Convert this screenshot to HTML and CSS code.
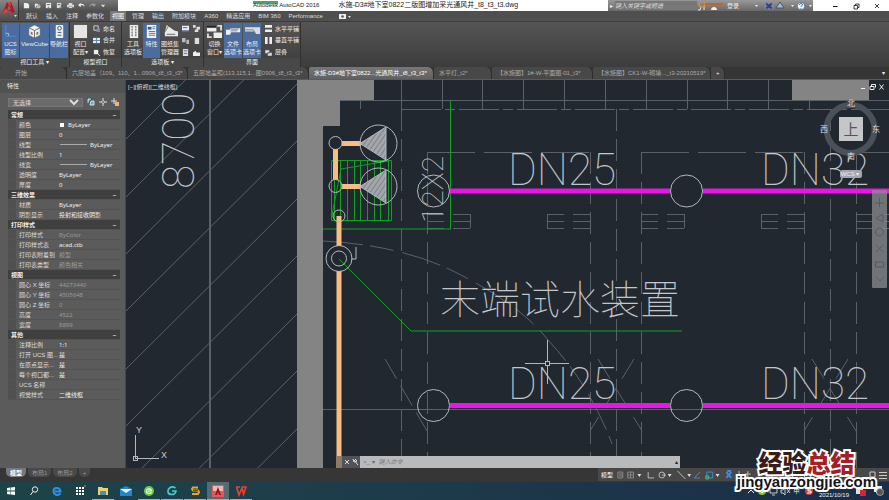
FILE: index.html
```html
<!DOCTYPE html>
<html lang="zh-CN">
<head>
<meta charset="utf-8">
<title>Autodesk AutoCAD 2016</title>
<link rel="stylesheet" href="styles.css">
</head>
<body>
<header class="titlebar">
  <div class="quick">
    <button aria-label="新建"><svg viewBox="0 0 8 8"><path d="M1 1h4l2 2v4H1z" fill="#eee"/></svg></button>
    <button aria-label="打开"><svg viewBox="0 0 8 8"><path d="M1 2h3l1 1h2v1H3L1 7z" fill="#eee"/><path d="M2 7l1.500-2.500H8L6.500 7z" fill="#bbb"/></svg></button>
    <button aria-label="保存"><svg viewBox="0 0 8 8"><path d="M1 1h6v6H1z" fill="#eee"/><path d="M2 3h4M3 6h2" stroke="#456"/></svg></button>
    <button aria-label="另存为"><svg viewBox="0 0 8 8"><path d="M1 1h5v6H1z" fill="#ddd"/><path d="M2 3h3M4 7l4-4" stroke="#456"/></svg></button>
    <button aria-label="打印"><svg viewBox="0 0 8 8"><path d="M2 1h4v2h2v3H0V3h2z" fill="#ddd"/><path d="M2 5h4v2H2z" fill="#fff" stroke="#555" stroke-width=".5"/></svg></button>
    <button aria-label="放弃"><svg viewBox="0 0 8 8"><path d="M3 1L0 3.500 3 6V4c2-.5 4 0 4 2 1-3-1-4-4-4z" fill="#eee"/></svg></button>
    <button aria-label="重做" class="dim"><svg viewBox="0 0 8 8"><path d="M5 1l3 2.500L5 6V4C3 3.500 1 4 1 6 0 3 2 2 5 2z" fill="#eee"/></svg></button>
    <button aria-label="更多"><svg viewBox="0 0 8 8"><path d="M1 3h5L3.500 6z" fill="#ddd"/></svg></button>
  </div>
  <h1 class="doc-title"><span class="app-name">Autodesk AutoCAD 2016</span><span>水施-D3#地下室0822二版图增加采光通风井_t8_t3_t3.dwg</span></h1>
  <div class="infobar">
    <button aria-label="展开搜索">▸</button>
    <input type="text" aria-label="搜索" placeholder="键入关键字或短语">
    <svg class="ic-wide" viewBox="0 0 30 10"><path d="M3 9l1-4M7 9V5M1 9h2" stroke="#eee"/><circle cx="5" cy="3" r="3" fill="none" stroke="#cf8b4d" stroke-width="1.500"/><path d="M8 3h18" stroke="#b9692d" stroke-width="2"/><path d="M14 9c0-4 6-4 6 0z" fill="#eee"/></svg>
    <button class="login">登录</button>
    <svg class="ic-mid" viewBox="0 0 60 10"><path d="M2 4l1.500 2L5 4zM38 4l1.500 2L41 4zM56 4l1.500 2L59 4z" fill="#eee"/><path d="M13 2l6 6M19 2l-6 6" stroke="#303f86" stroke-width="2"/><path d="M12 2h8v6h-8z" fill="none" stroke="#8996c6" stroke-width=".6"/><path d="M27 1l4 6h-8z" fill="#aab9d0" stroke="#41577c"/><circle cx="48" cy="5" r="3.800" fill="#f3f3f3" stroke="#426b91" stroke-width=".8"/><path d="M46.500 4c0-2 3-2 3-.3 0 1-1.500 1-1.500 2M48 7v.8" stroke="#25588e" fill="none"/></svg>
  </div>
  <div class="winctl">
    <button aria-label="最小化"><svg viewBox="0 0 8 8"><path d="M2 4.500h4.500" stroke="#111"/></svg></button>
    <button aria-label="还原"><svg viewBox="0 0 8 8"><path d="M2 3.500h3.500V7H2zM3.500 3V2H7v3.500H6" fill="none" stroke="#111" stroke-width=".8"/></svg></button>
    <button aria-label="关闭"><svg viewBox="0 0 8 8"><path d="M2 2l4 4M6 2L2 6" stroke="#111" stroke-width=".8"/></svg></button>
  </div>
</header>
<button class="app-button" aria-label="应用程序菜单"><svg viewBox="0 0 18 20"><path d="M2 15L7 2h4l4 10-3 1-1-2H8l3-2-2-4-3 8z" fill="#b31820"/><path d="M7 2h3l1 4-2-1zM2 15l4-7 1 4z" fill="#e3454b"/><path d="M14 15h3l-1.500 2z" fill="#ddd"/></svg></button>

<nav class="menu">
  <button>默认</button><button>插入</button><button>注释</button><button>参数化</button><button class="on">视图</button><button>管理</button><button>输出</button><button>附加模块</button><button>A360</button><button>精选应用</button><button>BIM 360</button><button>Performance</button>
  <button aria-label="功能区显示"><svg class="camera" viewBox="0 0 12 6"><path d="M0 1h7v5H0z" fill="#eee"/><circle cx="3.500" cy="3.500" r="1.300" fill="#555"/><path d="M9 3h3l-1.500 2z" fill="#ddd"/></svg></button>
</nav>

<section class="ribbon">
  <div class="panel p1">
    <div class="tools">
      <button class="big on"><svg viewBox="0 0 16 16"><path d="M3 2v11h11" fill="none" stroke="#5e9bd8" stroke-dasharray="2 1"/><path d="M3 10h3v3" stroke="#9cc4ea" fill="none"/></svg><span>UCS<br>图标</span></button>
      <button class="big wide on"><svg viewBox="0 0 16 16"><path d="M2 4l6-3 6 3v8l-6 3-6-3z" fill="#f1f1f1" stroke="#666" stroke-width=".6"/><path d="M2 4l6 3 6-3M8 7v8" stroke="#666" fill="none"/><path d="M4 8l2 1v3l-2-1zM10 9l2-1v3l-2 1z" fill="#777"/></svg><span>ViewCube<br>&nbsp;</span></button>
      <button class="big on"><svg viewBox="0 0 16 16"><rect x="4" y="1" width="8" height="14" rx="1" fill="#eee"/><circle cx="8" cy="4.500" r="2" fill="none" stroke="#456"/><path d="M6 9h4M6 12h4" stroke="#456"/></svg><span>导航栏<br>&nbsp;</span></button>
    </div><h2>视口工具 <i>▾</i></h2>
  </div>
  <div class="panel p2">
    <div class="tools">
      <button class="big"><svg viewBox="0 0 16 16"><path d="M1 1h14v14H1z" fill="#e6e6e6"/></svg><span>视口<br>配置▾</span></button>
      <div class="stack">
        <button><svg viewBox="0 0 8 8"><path d="M1 1h5v5H1z" fill="none" stroke="#ddd"/><path d="M4 4h4v4H4z" fill="#7a8da6"/></svg>命名</button>
        <button><svg viewBox="0 0 8 8"><path d="M0 1h8v6H0z" fill="#dce9f3"/><path d="M0 4h8M4 1v6" stroke="#5482aa"/></svg>合并</button>
        <button><svg viewBox="0 0 8 8"><path d="M1 1h5v5H1z" fill="#eee"/><path d="M5 5l3 3" stroke="#eee"/></svg>恢复</button>
      </div>
    </div><h2>模型视口</h2>
  </div>
  <div class="panel p3">
    <div class="tools">
      <button class="big"><svg viewBox="0 0 16 16"><path d="M4 1h9v14H4z" fill="#eee"/><path d="M6 3h1M10 3h1M6 6h1M10 6h1M6 9h1M10 9h1M6 12h1M10 12h1" stroke="#444" stroke-width="2"/></svg><span>工具<br>选项板</span></button>
      <button class="big on"><svg viewBox="0 0 16 16"><path d="M3 1h10v14H3z" fill="#f4f4f4"/><path d="M4 3h4v3H4z" fill="#315f99"/><path d="M9 3h3M9 5h3M5 8h7M5 10h7M5 12h7" stroke="#56779f"/></svg><span>特性<br>&nbsp;</span></button>
      <button class="big"><svg viewBox="0 0 16 16"><path d="M4 1l8 6 4 1v5H2V8z" fill="#e9e9e9"/><path d="M1 10L6 2M4 11h9" stroke="#666"/></svg><span>图纸集<br>管理器</span></button>
      <div class="minis">
        <button aria-label="命令行" class="on"><svg viewBox="0 0 8 8"><path d="M0 1h8v5H0z" fill="#eee"/><path d="M1 3h5" stroke="#456"/></svg></button>
        <button aria-label="设计中心"><svg viewBox="0 0 8 8"><path d="M0 0h3v3H0zM4 2h4v3H4zM2 5h4v3H2z" fill="#ddd"/></svg></button>
        <button aria-label="标记集"><svg viewBox="0 0 8 8"><path d="M0 1h4v5H0zM5 3h3v5H5z" fill="#b9b9b9"/></svg></button>
        <button aria-label="外部参照"><svg viewBox="0 0 8 8"><path d="M2 1h5v7H2z" fill="#ddd"/></svg></button>
        <button aria-label="计算器"><svg viewBox="0 0 8 8"><path d="M1 0h6v8H1z" fill="#ddd"/><path d="M2 2h4M2 5h4" stroke="#546a8e"/></svg></button>
        <button aria-label="图层"><svg viewBox="0 0 8 8"><path d="M0 4l3-2 1 2h4v4H0z" fill="#eee"/></svg></button>
      </div>
    </div><h2>选项板 <i>▾</i></h2>
  </div>
  <div class="panel p4">
    <div class="tools">
      <button class="big"><svg viewBox="0 0 16 16"><path d="M0 2h10v6H0zM7 9h9v6H7z" fill="#eee"/><path d="M11 2h4v5M5 14H1v-4" stroke="#ddd" stroke-width="2" fill="none"/><path d="M0 2h10v2H0z" fill="#222"/></svg><span>切换<br>窗口▾</span></button>
      <button class="big mid on"><svg viewBox="0 0 18 14"><path d="M0 5h4l2-2h11v5H6l-1 3H0z" fill="#eee"/><path d="M6 3h10l-3 4H5z" fill="#aaa"/></svg><span>文件<br>选项卡</span></button>
      <button class="big mid on"><svg viewBox="0 0 18 14"><path d="M0 2h18v8h-5l-2-3H0z" fill="#ddd"/><path d="M0 5h10l3 5" stroke="#777" fill="none"/></svg><span>布局<br>选项卡</span></button>
      <div class="stack">
        <button><svg viewBox="0 0 8 8"><path d="M0 0h8v3H0zM0 5h8v3H0z" fill="#eee"/></svg>水平平铺</button>
        <button><svg viewBox="0 0 8 8"><path d="M0 0h3v8H0zM5 0h3v8H5z" fill="#eee"/></svg>垂直平铺</button>
        <button><svg viewBox="0 0 8 8"><path d="M0 1h5v4H0zM3 4h5v4H3z" fill="#ddd" stroke="#555" stroke-width=".6"/></svg>层叠</button>
      </div>
    </div><h2>界面</h2>
  </div>
</section>

<nav class="files">
  <button class="t0">开始</button>
  <button class="t1">六层地盖（109、110、1...0906_t8_t3_t3*</button>
  <button class="t2">五层地盖照(113,115,1...图0906_t8_t3_t3*</button>
  <button class="t3 on">水施-D3#地下室0822...光通风井_t8_t3_t3*</button>
  <button class="t4">水平灯_t2*</button>
  <button class="t5">【水施图】1#-W-平面图-01_t3*</button>
  <button class="t6">【水施图】CK1-W-砌墙..._t3-20210519*</button>
  <button class="plus">+</button>
  <span class="more">▾</span>
</nav>

<main class="work">
  <aside class="props">
    <h2>特性</h2>
    <div class="picker">
      <select aria-label="选择对象"><option>无选择</option></select>
      <button aria-label="切换"><svg viewBox="0 0 8 8"><path d="M0 0h5v5H0z" fill="#2d5160"/><path d="M1 5V1h3M4 3h3v4H3z" stroke="#cfe3ec" fill="#78a4b5"/></svg></button>
      <button aria-label="选择"><svg viewBox="0 0 8 8"><path d="M4 0v8M0 4h8" stroke="#ddd"/><circle cx="4" cy="4" r="1.400" fill="#5b5b5b" stroke="#eee" stroke-width=".6"/></svg></button>
      <button aria-label="快速选择"><svg viewBox="0 0 8 8"><path d="M3 0v6M0 3h6" stroke="#ddd"/><path d="M4 4h4v4H4z" fill="#e9b67c"/></svg></button>
    </div>
    <table>
      <colgroup><col class="name"><col></colgroup>
      <tbody>
        <tr class="sec"><th colspan="2">常规<b>–</b></th></tr>
        <tr><th>颜色</th><td><span class="swatch"></span>ByLayer</td></tr>
        <tr><th>图层</th><td>0</td></tr>
        <tr><th>线型</th><td><span class="rule"></span>ByLayer</td></tr>
        <tr><th>线型比例</th><td>1</td></tr>
        <tr><th>线宽</th><td><span class="rule"></span>ByLayer</td></tr>
        <tr><th>透明度</th><td>ByLayer</td></tr>
        <tr><th>厚度</th><td>0</td></tr>
      </tbody>
      <tbody>
        <tr class="sec"><th colspan="2">三维效果<b>–</b></th></tr>
        <tr><th>材质</th><td>ByLayer</td></tr>
        <tr><th>阴影显示</th><td>投射和接收阴影</td></tr>
      </tbody>
      <tbody>
        <tr class="sec"><th colspan="2">打印样式<b>–</b></th></tr>
        <tr><th>打印样式</th><td class="off">ByColor</td></tr>
        <tr><th>打印样式表</th><td>acad.ctb</td></tr>
        <tr><th>打印表附着到</th><td class="off">模型</td></tr>
        <tr><th>打印表类型</th><td class="off">颜色相关</td></tr>
      </tbody>
      <tbody>
        <tr class="sec"><th colspan="2">视图<b>–</b></th></tr>
        <tr><th>圆心 X 坐标</th><td class="off">44273440</td></tr>
        <tr><th>圆心 Y 坐标</th><td class="off">4505648</td></tr>
        <tr><th>圆心 Z 坐标</th><td class="off">0</td></tr>
        <tr><th>高度</th><td class="off">4522</td></tr>
        <tr><th>宽度</th><td class="off">8899</td></tr>
      </tbody>
      <tbody>
        <tr class="sec"><th colspan="2">其他<b>–</b></th></tr>
        <tr><th>注释比例</th><td>1:1</td></tr>
        <tr><th>打开 UCS 图...</th><td>是</td></tr>
        <tr><th>在原点显示...</th><td>是</td></tr>
        <tr><th>每个视口都...</th><td>是</td></tr>
        <tr><th>UCS 名称</th><td></td></tr>
        <tr><th>视觉样式</th><td>二维线框</td></tr>
      </tbody>
    </table>
  </aside>

  <section class="canvas">
    <svg class="drawing" viewBox="126 80 763 388" preserveAspectRatio="xMinYMin slice">
      <defs>
        <pattern id="hatch" width="4" height="4" patternUnits="userSpaceOnUse" patternTransform="rotate(35)"><path d="M0 0h4v4H0z" fill="#a3a7ac"/><path d="M0 0v4" stroke="#5a6068" stroke-width="1"/></pattern>
        <g id="cross"><path d="M-18 -31L26 41M18 -31L-26 41" stroke-dasharray="23 11"/></g>
        <g id="pump"><circle r="18.500"/><path d="M-18.500 0L7.500-16.500v33z" fill="url(#hatch)"/></g>
      </defs>
      <g class="hair">
        <path d="M126 139l171-170M126 197l171-170M126 254l171-170M126 311l171-170M126 369l171-170M126 426l171-170M126 484l171-170M126 541l171-170M126 599l171-170"/>
        <path d="M210 80v388" stroke-width="2"/>
      </g>
      <path class="mass" d="M297 80h77v21h-34v25h-17v342h-26zM792 80h77v21h-77z"/>
      <g class="hair crisp">
        <path d="M340 100.500h549M360.500 100v9M401.500 80v29M442.500 80v29M482.500 80v29M523.500 80v29M564.500 80v29M605.500 80v29M646.500 80v29M687.500 80v29M727.500 80v29M768.500 80v29M809.500 101v8M323 409.500h566"/>
        <path d="M401 109.500h488" stroke-dasharray="40 4 10 4"/>
        <path d="M427 152.500h163M641 152.500h163M856 152.500h33" stroke-dasharray="48 9"/>
        <path d="M401.500 109v359M616.500 109v359M830.500 109v359M427.500 152v316M590.500 152v316M641.500 152v316M804.500 152v316M856.500 152v316" stroke-dasharray="22 8"/>
        <path d="M427 214.500h43M427 221.500h43M427 228.500h43M547 214.500h43M547 221.500h43M547 228.500h43M641 214.500h43M641 221.500h43M641 228.500h43M761 214.500h43M761 221.500h43M761 228.500h43M856 214.500h33M856 221.500h33M856 228.500h33" stroke-dasharray="17 9"/>
        <path d="M470.500 214v14M547.500 214v14M684.500 214v14M761.500 214v14"/>
      </g>
      <g class="hair">
        <use href="#cross" x="616" y="390"/><use href="#cross" x="830" y="390"/>
        <path d="M385 359l42 72" stroke-dasharray="23 8"/>
        <path d="M323 241Q400 245 453 271Q520 304 548 340Q590 385 612 444" stroke-dasharray="40 7 24 9"/>
      </g>
      <g class="green">
        <path d="M331.500 160.500h60v60h-60zM334.500 160v60M340.500 160v60M347.500 160v60M354.500 160v60M360.500 160v60M367.500 160v60M374.500 160v60M380.500 160v60M388.500 160v60"/>
        <path d="M332 215l9-46 47-8M450.500 101v128M323 229h128"/>
        <path d="M339 259l72 72h271"/>
      </g>
      <g class="pipe"><path d="M335.500 149v31M342 143.500h19M342 186.500h19M339 216v30M339 271v197"/></g>
      <g class="main-pipe"><path d="M450 191h220M703 191h186M450 405.500h220M703 405.500h186"/></g>
      <g class="white">
        <circle cx="335.500" cy="143" r="6.500"/><circle cx="335.500" cy="186" r="6.500"/><circle cx="339" cy="216" r="6"/>
        <circle cx="339" cy="258.500" r="13"/><circle cx="339" cy="258.500" r="7.500"/>
        <path d="M356 247v12h-5"/>
        <use href="#pump" x="378.500" y="143.500"/><use href="#pump" x="378.500" y="186.500"/>
        <circle cx="433.500" cy="191" r="16"/><circle cx="686.500" cy="191" r="16"/>
        <circle cx="433.500" cy="405.500" r="16"/><circle cx="686.500" cy="405.500" r="16"/>
      </g>
      <g class="label">
        <text x="508" y="185">DN25</text><text x="761" y="185">DN32</text>
        <text x="508" y="399">DN25</text><text x="761" y="399">DN32</text>
        <text transform="translate(194 189) rotate(-90)">8700</text>
        <text class="short" transform="translate(443 223) rotate(-90)">12X2</text>
        <text class="han" x="440" y="314">末端试水装置</text>
      </g>
      <g class="white crisp"><path d="M547.500 340v21M547.500 365v19M525 363.500h20M549 363.500h20M545.500 361.500h4v4h-4z"/>
        <path d="M135.500 435v23.500h23M133.500 456.500h4v4h-4z"/></g>
      <g class="axis"><text x="136" y="433">Y</text><text x="161" y="458">X</text></g>
      <g class="cube">
        <circle cx="850.500" cy="129" r="24"/>
        <path d="M839 117h24v24h-24z" fill="#c4c6c7"/>
        <rect x="840" y="170" width="22" height="8" rx="2" fill="#a3a7b2"/>
        <text x="851" y="106">北</text><text x="851" y="159">南</text><text x="824" y="132">西</text><text x="876" y="132">东</text>
        <text class="top" x="851" y="135">上</text><text class="wcs" x="850" y="176">WCS ▾</text>
      </g>
      <path d="M861 88.500h4M870 86.500h4v3h-4zM871.500 86v-1.500h4v3M879.500 84.500l4 5M883.500 84.500l-4 5" stroke="#eee" fill="none"/>
      <g class="navbar"><rect x="872" y="190" width="15" height="98" rx="1"/><path d="M879.500 198v9M875 203h9M876 218l7-4v8zM879.500 228a4 4 0 1 1-.1 0M876 245l7 7M883 245l-7 7M875.500 262h8v5h-8zM876 277l4 4 4-4"/></g>
    </svg>
    <span class="view-label">[−][俯视][二维线框]</span>
    <form class="command">
      <span class="grip"></span>
      <span class="cmd-tools"><svg viewBox="0 0 18 10"><path d="M3 3l4 4M7 3L3 7M12 3l4 5M11 2l1 3 3-1-2-2" stroke="#ddd" fill="none"/></svg></span>
      <label for="cmd">&gt;_ ▾</label><input id="cmd" type="text" placeholder="键入命令"><span class="up">▴</span>
    </form>
  </section>
</main>

<footer class="status">
  <button class="on">模型</button><button>布局1</button><button>布局2</button><button>+</button>
  <div class="modes">
    <span>模型</span>
    <svg viewBox="0 0 262 12" preserveAspectRatio="xMinYMid meet"><g fill="none" stroke="#bbb"><path d="M5 3h5v6H5zM6 5h4M6 7h4M15 3h6v6h-6zM18 3v6M15 6h6" stroke="#888"/><path d="M36 3v6h6"/><circle cx="50" cy="6" r="3"/><path d="M50 6h4M66 2l8 8"/><path d="M83 9l6-6M83 9h6M96 3h6v6h-6z" stroke="#388be0"/><path d="M95 7h3v3h-3z" stroke="#53bb81"/><path d="M116 3l5 6M121 3l-5 6M117 2h4" stroke="#388be0" stroke-width="2"/><path d="M129 2v8M126 6h5M138 2v8M135 5h6M157 4h6v4h-6M180 3l5 6M196 3h6v6h-6z"/><path d="M212 3h6v6h-6z" stroke="#388be0" stroke-width="2"/><path d="M228 7l3-4 3 4z" stroke="#dc8e43"/></g><path d="M25 5h4l-2 3zM56 5h4l-2 3zM76 5h4l-2 3zM105 5h4l-2 3z" fill="#ddd"/></svg>
    <svg class="burger" viewBox="0 0 20 12"><path d="M1 3h5v5H1zM10 3.500h8M10 6.500h8M10 9.500h8" stroke="#ccc" fill="none"/></svg>
  </div>
</footer>

<footer class="taskbar">
  <button aria-label="开始"><svg viewBox="0 0 12 12"><path d="M2 3l3.500-.5v3H2zM6 2.400L10 2v3.500H6zM2 6.500h3.500v3L2 9zM6 6.500h4V10l-4-.5z" fill="#fff"/></svg></button>
  <button aria-label="搜索"><svg viewBox="0 0 12 12"><circle cx="7" cy="4.500" r="2.700" fill="none" stroke="#eee"/><path d="M5 6.500L2.500 10" stroke="#eee"/></svg></button>
  <button aria-label="Edge"><svg viewBox="0 0 12 12"><path d="M9.500 8.500C7 11 2.500 10 2.500 6S9 1.500 9.500 6.500H4" fill="none" stroke="#2f91e6" stroke-width="2"/></svg></button>
  <button aria-label="应用"><svg viewBox="0 0 12 12"><path d="M2 3h2M5 3h2M8 3h2M2 6h2M5 6h2M8 6h2M2 9h2M5 9h2M8 9h2" stroke="#fff" stroke-width="2"/><circle cx="11" cy="1" r="1" fill="#e04b4b"/></svg></button>
  <button aria-label="文件资源管理器" class="run"><svg viewBox="0 0 12 12"><path d="M1 2h4l1 1h5v7H1z" fill="#f5cf65"/><path d="M3 6h6v4H3z" fill="#478fbd"/></svg></button>
  <button aria-label="邮件"><svg viewBox="0 0 12 12"><path d="M0 4l6-3 6 3v7H0z" fill="#2384d4"/><path d="M0 4l6 4 6-4z" fill="#e8f5ff"/></svg></button>
  <button aria-label="浏览器" class="run"><svg viewBox="0 0 12 12"><circle cx="6" cy="6" r="5" fill="#71c84b"/><path d="M8.500 7.500C7 9 3.500 9 3.500 6S8.500 3.500 8.500 6H5" fill="none" stroke="#efffdf" stroke-width="1.200"/></svg></button>
  <button aria-label="同步" class="run"><svg viewBox="0 0 12 12"><path d="M9.500 3C5 0 1.500 4 2 7s7 4 8-1H6" fill="none" stroke="#4ac7cd" stroke-width="1.600"/></svg></button>
  <button aria-label="工具" class="run"><svg viewBox="0 0 12 12"><path d="M9 2.500H4L3 4l1 1.500h5L10 7 9 9H3" fill="none" stroke="#e7a820" stroke-width="2"/><path d="M4 5.500h5" stroke="#8b4a14"/></svg></button>
  <button aria-label="AutoCAD" class="run current"><svg viewBox="0 0 12 12"><path d="M0 0h12v12H0z" fill="#dc5c5b"/><path d="M1 1h10v5H1z" fill="#f1b6b4"/><path d="M3 10l3-8 3 8H7L6 7l-1 3z" fill="#9e1118"/></svg></button>
  <button aria-label="WPS" class="run"><svg viewBox="0 0 12 12"><path d="M1 2h4M1.500 2L4 10l3-7 1.500 6L11 2H7" fill="none" stroke="#e2432f" stroke-width="1.700"/></svg></button>
  <div class="tray">
    <svg viewBox="0 0 46 12"><path d="M2 8l3-3 3 3" stroke="#eee" fill="none"/><circle cx="16" cy="6" r="4" fill="#86c928"/><path d="M14 6l2 2 3-4" stroke="#fff" fill="none"/><path d="M24 3h7v5h-7zM26 10h3M35 5h2l2-2v7l-2-2h-2zM41 4l3 4M44 4l-3 4" stroke="#eee" fill="none" stroke-width=".8"/></svg>
    <span class="ime">中</span>
    <svg class="sogou" viewBox="0 0 12 12"><circle cx="6" cy="6" r="4" fill="#da3b35"/><path d="M8 4H5v2h3v2H4" stroke="#fff" fill="none"/></svg>
    <time>2021/10/19</time>
    <svg class="notes" viewBox="0 0 40 12"><path d="M7 2h7v7H7z" fill="#ddd"/><path d="M11 5h6v6h-6z" fill="#d92531"/><path d="M25 1h8v6h-4l-2 2V7h-2z" fill="#eee"/><circle cx="31" cy="7" r="3.500" fill="#555" stroke="#ccc" stroke-width=".6"/></svg>
  </div>
</footer>

<div class="watermark"><strong>经验<em>总结</em></strong><span>jingyanzongjie.com</span></div>
</body>
</html>
```
FILE: styles.css
```css
* { box-sizing: border-box; }
body {
  margin: 0; height: 100vh; overflow: hidden; position: relative;
  display: flex; flex-direction: column; background: #212830; color: #ddd;
  font: 6px/8px "Liberation Sans", "Noto Sans CJK SC", sans-serif;
}
button, input, select { font: inherit; color: inherit; background: none; border: 0; padding: 0; margin: 0; }
button { white-space: nowrap; }
h1, h2 { margin: 0; font: inherit; }
svg { display: block; }

.titlebar { flex: 0 0 11px; display: flex; background: #fff; color: #222; }
.quick { flex: 0 0 118px; padding-left: 23px; display: flex; align-items: center; gap: 4px; background: linear-gradient(#777, #505050); }
.quick button { flex: 0 0 7px; }
.quick .dim { opacity: .4; }
.quick svg { width: 7px; height: 7px; }
.doc-title { flex: 1; display: flex; gap: 19px; padding: 1px 0 0 135px; font-size: 7px; white-space: nowrap; background: linear-gradient(#49a36c, #49a36c) 135px 1px / 25px 3px no-repeat; }
.app-name { font-size: 6px; }
.infobar { flex: 0 0 205px; display: flex; align-items: center; color: #eee; background: linear-gradient(#999, #676767); }
.infobar > button:first-child { width: 7px; }
.infobar input { width: 82px; height: 9px; background: #777; font-style: italic; }
.infobar input::placeholder { color: #ddd; }
.ic-wide { width: 30px; height: 10px; }
.login { width: 18px; text-align: left; }
.ic-mid { margin-left: auto; width: 60px; height: 10px; }
.winctl { flex: 0 0 76px; display: flex; justify-content: space-around; align-items: center; padding: 0 2px 0 12px; }
.winctl svg { width: 8px; height: 8px; }
.app-button { position: absolute; left: 0; top: 0; width: 19px; height: 20px; background: linear-gradient(#878787, #4d4d4d); border-right: 1px solid #333; }
.app-button svg { width: 18px; height: 20px; }

.menu { flex: 0 0 10px; display: flex; align-items: center; gap: 4px; padding-left: 24px; background: #4f4f4f; }
.menu button { padding: 0 2px; height: 10px; line-height: 10px; }
.menu .on { background: #777; color: #fff; }
.camera { width: 12px; height: 6px; margin-left: 8px; }

.ribbon { flex: 0 0 46px; display: flex; background: linear-gradient(#555, #3c3c3c); border-top: 1px solid #3b3b3b; }
.panel { display: flex; flex-direction: column; border-right: 1px solid #303030; padding: 1px 1px 0 2px; }
.p1 { flex: 0 0 70px; } .p2 { flex: 0 0 52px; } .p3 { flex: 0 0 82px; } .p4 { flex: 0 0 96px; }
.panel h2 { text-align: center; line-height: 9px; background: #484848; margin: 0 -1px 0 -2px; color: #eee; }
.panel i { font-style: normal; }
.tools { flex: 1; display: flex; gap: 1px; }
.big { flex: 0 0 17px; display: flex; flex-direction: column; align-items: center; line-height: 8px; color: #eee; }
.big svg { width: 15px; height: 15px; margin: 1px 0; }
.big.wide { flex-basis: 29px; }
.big.mid { flex-basis: 18px; }
.big.on, .minis .on { background: #4a6c9f; }
.stack { flex: 1; display: flex; flex-direction: column; justify-content: space-around; padding-left: 3px; }
.stack button { display: flex; gap: 3px; align-items: center; color: #eee; }
.stack svg, .minis svg { width: 7px; height: 7px; }
.minis { flex: 1; display: grid; grid-template-columns: 1fr 1fr; place-items: center; }

.files { flex: 0 0 13px; display: flex; align-items: stretch; background: #353535; color: #aaa; border-bottom: 1px solid #5a5a5a; }
.files button { text-align: left; background: #484848; border-right: 1px solid #2d2d2d; border-radius: 2px 6px 0 0; padding-left: 5px; overflow: hidden; }
.files .on { background: linear-gradient(#777, #616161); color: #fff; }
.files .t0 { flex: 0 0 67px; padding-left: 15px; }
.files .t1, .files .t2 { flex: 0 0 121px; }
.files .t3 { flex: 0 0 125px; }
.files .t4 { flex: 0 0 58px; }
.files .t5 { flex: 0 0 101px; }
.files .t6 { flex: 0 0 118px; }
.files .plus { flex: 0 0 14px; color: #eee; }
.more { margin-left: auto; padding: 2px 4px; color: #eee; }

.work { flex: 1; min-height: 0; display: flex; }
.props { flex: 0 0 126px; background: #5b5b5b; padding: 0 6px 0 8px; border-right: 1px solid #464646; overflow: hidden; }
.props h2 { margin: 0 -6px 0 -8px; padding-left: 7px; line-height: 13px; background: #525252; color: #eee; }
.picker { display: flex; gap: 4px; align-items: center; height: 12px; margin: 3px 0 2px; }
.picker select { flex: 1; height: 9px; background: #6b6b6b; border: 1px solid #777; line-height: 7px; }
.picker button, .picker svg { width: 8px; height: 8px; }
table { width: 112px; border-spacing: 0; table-layout: fixed; }
.name { width: 51px; }
th, td { padding: 0; font-weight: 400; text-align: left; line-height: 8px; height: 10px; white-space: nowrap; color: #ddd; border-bottom: 1px solid #535353; }
th { padding-left: 11px; box-shadow: inset 8px 0 #505050; }
td { color: #eee; font-family: "Noto Sans", "Noto Sans CJK SC", sans-serif; }
td.off { color: #999; }
.sec th { padding-left: 3px; background: #3f3f3f; box-shadow: none; font-weight: 700; color: #eee; }
.sec b { float: right; padding-right: 4px; }
.swatch { display: inline-block; width: 4px; height: 4px; background: #fff; margin: 0 4px 0 1px; }
.rule { display: inline-block; width: 27px; height: 1px; background: #aaa; margin: 0 3px 2px 1px; }

.canvas { flex: 1; min-width: 0; position: relative; background: #212830; overflow: hidden; }
.drawing { width: 100%; height: 100%; }
.drawing g { fill: none; }
.hair { stroke: #5b6168; }
.crisp { shape-rendering: crispEdges; }
.mass { fill: #848484; }
.green { stroke: #10a022; }
.pipe { stroke: #f6bd84; stroke-width: 5; }
.main-pipe { stroke: #e914e7; stroke-width: 5; }
.white { stroke: #b4b8bd; }
.drawing .label { fill: #c3c6ca; font: 100 44px Roboto, "Noto Sans CJK SC", sans-serif; }
.label .short { font-size: 30px; }
.label .han { font: 100 40px "Noto Sans CJK SC", sans-serif; }
.drawing .axis { fill: #ccc; font-size: 9px; }
.drawing .cube { fill: #ddd; font-size: 8px; text-anchor: middle; }
.cube circle { fill: none; stroke: #4b5158; stroke-width: 6; }
.cube .top { fill: #555; font-size: 15px; }
.cube .wcs { fill: #eee; font-size: 6px; }
.navbar rect { fill: #8b8d8f; opacity: .75; }
.navbar path { stroke: #555b60; }
.view-label { position: absolute; left: 2px; top: 3px; color: #ddd; }
.command { position: absolute; left: 210px; right: 209px; bottom: 0; height: 12px; display: flex; align-items: center; background: #b9babc; color: #666; }
.grip { flex: 0 0 6px; height: 12px; background: #8a7a67; }
.cmd-tools { flex: 0 0 18px; height: 12px; padding-top: 1px; background: #50545a; }
.cmd-tools svg { width: 18px; height: 10px; }
.command label { padding: 0 4px 0 3px; }
.command input { flex: 1; min-width: 0; font-style: italic; }
.command input::placeholder { color: #777; }
.up { padding-right: 2px; color: #222; }

.status { flex: 0 0 14px; display: flex; align-items: flex-start; gap: 2px; padding: 0 0 0 6px; background: #363636; }
.status > button { height: 9px; padding: 0 4px; background: #494949; color: #999; border-radius: 0 0 5px 5px; }
.status > .on { background: #777; color: #fff; font-weight: 700; }
.modes { margin-left: auto; flex: 0 0 286px; height: 13px; display: flex; align-items: center; background: #484848; color: #fff; padding-left: 3px; }
.modes svg { flex: 1; height: 12px; min-width: 0; }
.modes .burger { flex: 0 0 20px; }

.taskbar { flex: 0 0 18px; display: flex; background: linear-gradient(90deg, #1c4448, #1d3b4a 45%, #1a2d48); }
.taskbar > button { flex: 0 0 22px; margin-right: 1px; display: grid; place-items: center; border-bottom: 1px solid transparent; }
.taskbar > button svg { width: 12px; height: 12px; }
.taskbar .run { border-color: #8ab9d0; }
.taskbar .current { background: #536b73; }
.tray { margin-left: auto; display: flex; align-items: center; color: #eee; }
.tray > svg { width: 46px; height: 12px; }
.tray .ime { width: 9px; text-align: center; }
.tray .sogou { width: 12px; margin-left: 2px; }
.tray time { padding: 8px 0 0 4px; }
.tray .notes { width: 40px; }

.watermark { position: absolute; right: 13px; bottom: 11px; display: flex; flex-direction: column; align-items: center; white-space: nowrap; color: #3a1c18; -webkit-text-stroke: 4px #fff; paint-order: stroke fill; stroke-linejoin: round; }
.watermark strong { font: 900 24px/24px "Noto Sans CJK SC", sans-serif; }
.watermark em { font-style: normal; color: #a51f27; }
.watermark span { font: 700 15px/15px "Liberation Sans", sans-serif; color: #151515; }
```
